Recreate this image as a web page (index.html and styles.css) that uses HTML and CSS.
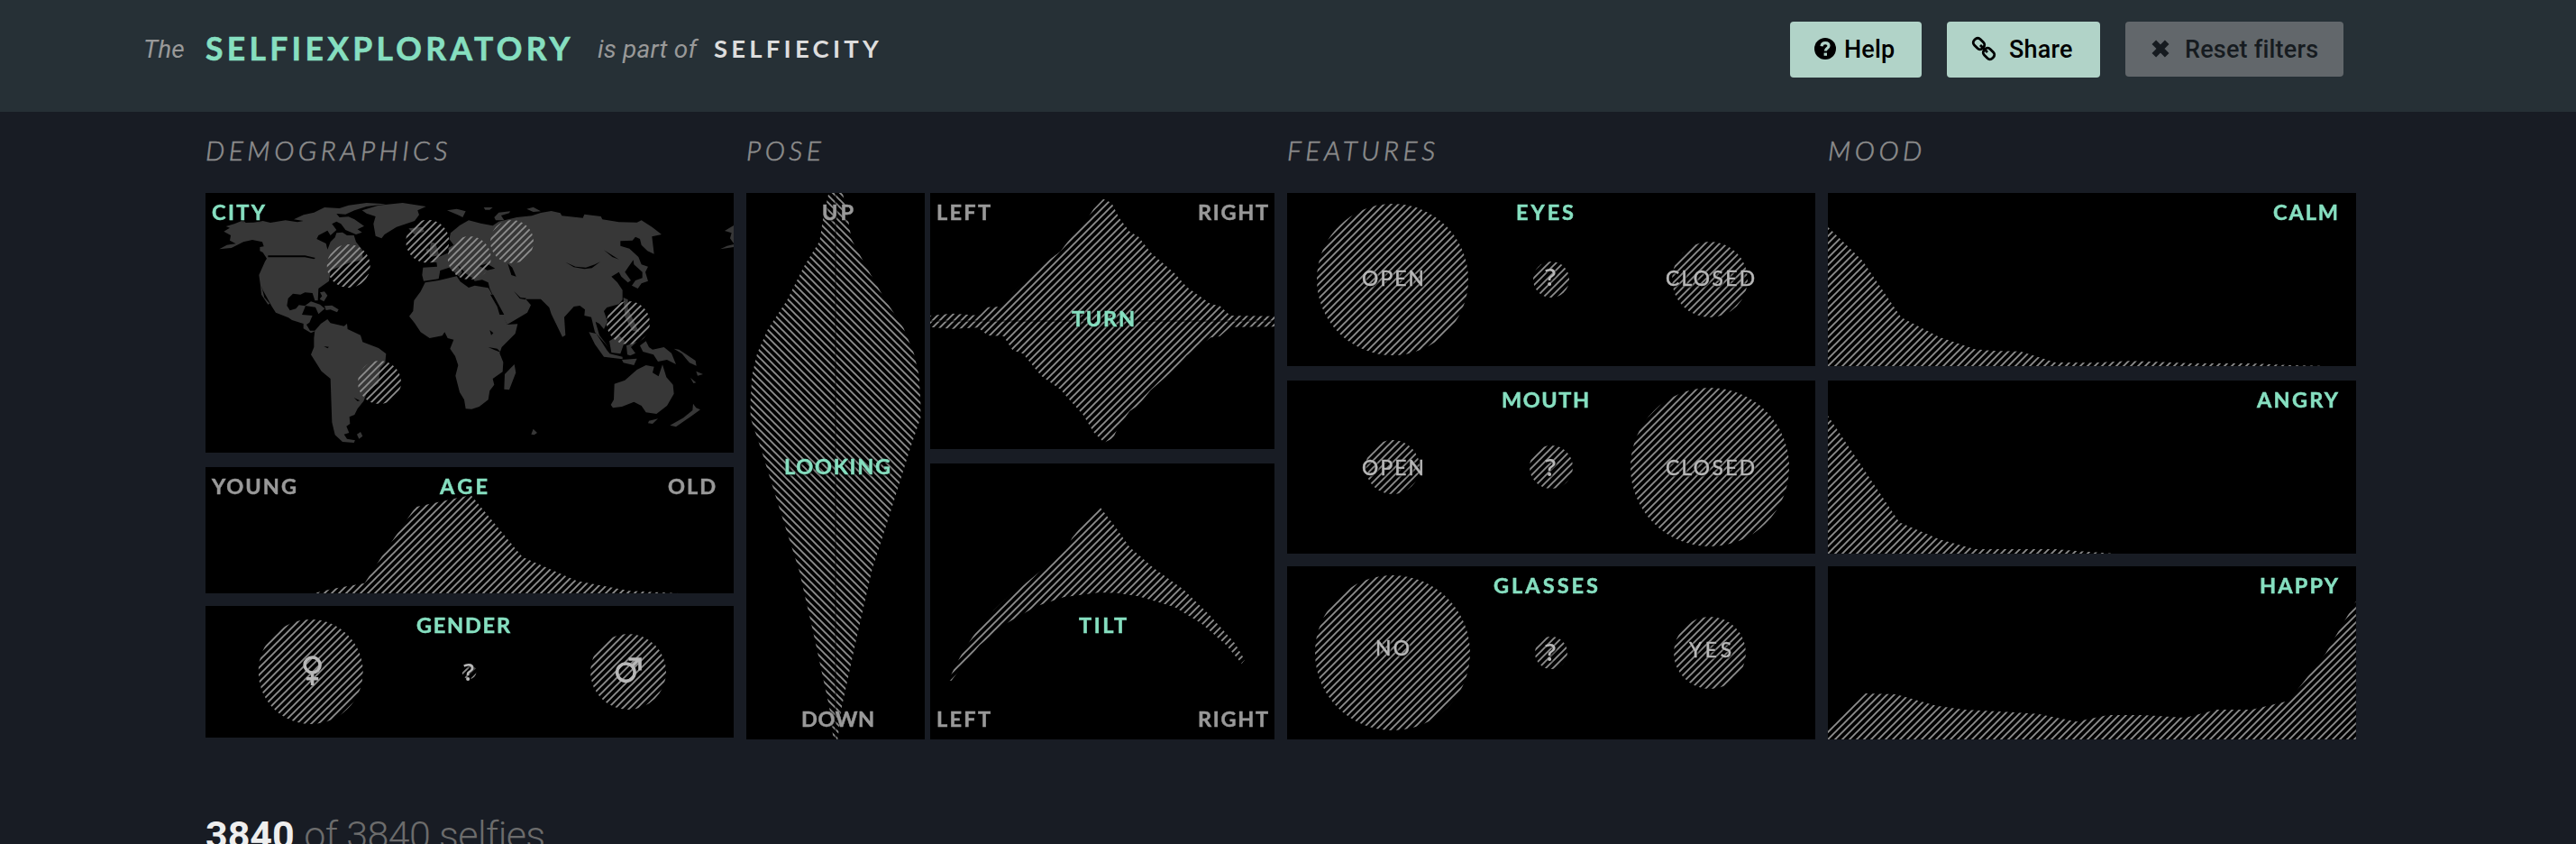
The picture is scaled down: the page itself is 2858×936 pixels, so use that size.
FILE: index.html
```html
<!DOCTYPE html>
<html lang="en">
<head>
<meta charset="utf-8">
<title>Selfiexploratory</title>
<link rel="stylesheet" href="styles.css">
</head>
<body>
<svg class="defs" width="0" height="0" aria-hidden="true">
  <defs>
    <pattern id="hatch" width="8" height="8" patternUnits="userSpaceOnUse"><path class="hatch-line" d="M-2,2 L2,-2 M0,8 L8,0 M6,10 L10,6"/></pattern>
    <pattern id="hatch-back" width="8" height="8" patternUnits="userSpaceOnUse"><path class="hatch-line" d="M-2,6 L2,10 M0,0 L8,8 M6,-2 L10,2"/></pattern>
  </defs>
</svg>
<header class="topbar">
  <div class="brand">
    <span class="brand-aside the">The</span>
    <h1 class="brand-name">SELFIEXPLORATORY</h1>
    <span class="brand-aside part">is part of</span>
    <span class="brand-parent">SELFIECITY</span>
  </div>
  <nav class="actions">
    <button class="btn help"><svg width="24" height="24" viewBox="0 0 24 24"><circle cx="12" cy="12" r="12"/><path class="q" d="M8 9.2C8.3 6.6 10 5.6 12.2 5.6C14.6 5.6 16 7 16 8.8C16 11.6 12.3 11.4 12.3 14.6"/><rect class="qd" x="10.6" y="16.6" width="3.4" height="3.2"/></svg><span>Help</span></button>
    <button class="btn share"><svg width="26" height="26" viewBox="0 0 26 26"><g class="link"><rect x="1" y="2.800" width="13" height="9.400" rx="4" transform="rotate(45 7.500 7.500)"/><rect x="12" y="13.800" width="13" height="9.400" rx="4" transform="rotate(45 18.500 18.500)"/><path d="M9 9L17 17"/></g></svg><span>Share</span></button>
    <button class="btn reset"><svg width="20" height="20" viewBox="0 0 20 20"><path class="cross" d="M2.800 2.800L17.200 17.200M17.200 2.800L2.800 17.200"/></svg><span>Reset filters</span></button>
  </nav>
</header>
<main class="board">
  <section class="group demographics">
    <h2>DEMOGRAPHICS</h2>
    <svg class="panel" width="586" height="288">
      <g class="land" transform="translate(-8 -9) scale(.33333)">
        <path d="M70 214L95 200L125 196L105 185L108 168L85 155L105 143L92 138L120 130L150 118L158 126L185 125L215 120L240 126L290 118L330 124L350 120L318 115L350 100L385 92L420 75L470 78L500 68L560 60L625 64L560 72L520 85L490 98L460 96L470 108L500 106L520 115L552 137L530 148L545 158L525 165L490 150L475 130L460 122L445 130L460 150L440 168L430 152L400 168L394 180L425 195L430 215L440 190L455 175L460 160L480 158L495 168L518 168L525 190L545 215L548 250L500 260L440 285L435 320L400 345L398 385L388 385L380 360L355 358L340 365L315 362L299 378L295 402L305 418L325 412L335 400L357 403L345 432L380 435L370 458L360 465L372 485L392 485L375 493L350 478L350 462L312 450L300 442L258 425L245 405L215 350L210 335L220 375L238 395L232 398L210 365L207 335L202 300L222 255L228 245L215 225L205 220L205 207L218 205L213 190L180 183L150 190L110 210Z"/>
        <path d="M388 485L408 462L430 447L440 460L485 470L495 462L497 480L540 500L547 523L600 543L625 562L622 592L605 610L600 660L565 682L550 720L530 745L520 765L503 772L505 795L493 803L502 825L485 830L495 845L522 850L518 858L480 855L455 832L445 790L440 645L410 620L375 565L385 540L385 510ZM528 830L540 822L547 836L535 845ZM545 85L600 68L680 60L758 72L730 85L735 100L720 120L660 140L620 165L610 178L590 170L583 130L590 105L560 95ZM355 402L375 388L405 398L421 412L400 430L390 407ZM420 403L445 401L467 415L462 424L440 415L425 417ZM405 358L420 355L430 368L418 388L404 380L412 370Z"/>
        <path d="M748 275L795 272L793 258L770 258L800 240L835 225L832 210L850 200L835 180L840 160L870 135L900 118L940 128L980 136L1000 122L1060 108L1110 103L1140 93L1175 87L1205 94L1210 103L1280 110L1285 98L1340 105L1345 115L1400 124L1460 125L1475 118L1510 140L1542 165L1510 172L1517 230L1495 220L1475 200L1470 180L1455 173L1445 185L1405 187L1405 203L1435 212L1465 240L1475 265L1497 272L1488 290L1497 320L1475 328L1463 345L1443 335L1455 318L1478 310L1478 290L1450 265L1448 250L1430 275L1420 290L1440 318L1430 325L1408 305L1400 290L1375 305L1395 325L1412 350L1412 382L1400 397L1360 408L1350 420L1362 455L1350 480L1335 462L1322 455L1335 500L1365 540L1320 490L1308 440L1285 435L1287 415L1270 402L1250 405L1218 440L1222 500L1212 506L1175 430L1168 408L1140 380L1090 380L1107 400L1095 425L1028 465L1010 430L970 345L965 325L945 316L920 320L915 312L890 295L860 262L878 290L868 305L835 275L805 285L800 313L750 320L745 300Z"/>
        <path d="M755 325L800 318L860 304L872 322L900 342L920 335L965 343L970 350L1015 435L1028 465L1063 463L1055 495L1010 540L1003 560L1015 590L1013 622L980 645L985 665L970 685L965 715L935 738L910 746L890 745L885 715L870 690L856 635L865 600L855 570L838 545L850 515L830 510L820 490L812 502L770 510L740 490L720 460L702 437L715 420L718 385L740 355ZM1020 630L1052 597L1057 625L1035 682L1018 680ZM700 145L745 140L752 155L720 166ZM770 215L775 190L790 195L802 235L770 240ZM757 215L768 210L765 232ZM828 85L860 80L890 88L880 108L860 98ZM950 75L980 75L970 83L955 83ZM985 108L1000 92L1038 88L1035 94L1008 102L1018 118L990 118ZM1093 80L1115 74L1140 88L1115 90ZM1108 830L1115 812L1128 825L1118 832ZM1782 135L1752 153L1775 160L1770 178L1782 195ZM1737 214L1760 203L1782 198V207Z"/>
        <path transform="translate(-100 0)" d="M1400 490L1425 495L1460 550L1470 562L1512 572L1512 580L1450 572L1420 530ZM1468 520L1500 500L1520 520L1505 562L1475 558ZM1525 535L1560 522L1540 540L1555 560L1538 568L1528 565ZM1510 582L1560 578L1550 600L1515 592ZM1570 535L1590 520L1600 540L1612 548L1650 540L1675 560L1690 597L1660 582L1630 588L1615 565L1580 555ZM1683 545L1700 548L1755 585L1758 602L1735 592L1710 562ZM1757 620L1780 630L1762 635ZM1738 642L1757 658L1748 660ZM1515 375L1530 382L1530 412L1567 490L1545 485L1520 440ZM1485 662L1520 650L1560 615L1590 600L1617 605L1612 625L1632 637L1645 598L1658 640L1680 665L1683 695L1660 735L1625 762L1590 757L1575 735L1550 722L1510 738L1480 742L1473 732L1483 715ZM1600 785L1630 778L1612 795L1597 793ZM1670 800L1715 775L1745 750L1747 728L1757 742L1771 748L1740 770L1690 805Z"/>
        <path class="water" d="M935 270L960 262L988 278L962 284ZM1030 262L1045 275L1058 305L1042 300ZM972 365L982 366L1018 432L1003 432L995 405ZM1222 257L1255 272L1290 275L1320 265L1338 256L1310 277L1285 280L1250 274ZM232 235L355 235L390 243L385 247L355 241H232ZM418 537L435 539L430 544ZM1050 353L1072 375L1092 377L1088 382L1070 378ZM1350 217L1400 248L1378 240ZM965 540L995 545L1008 558L985 549ZM518 708L538 718L530 720ZM970 483L982 493L975 500Z"/>
      </g>
      <g class="dots"><circle cx="158.700" cy="81" r="24"/><circle cx="246.300" cy="53.700" r="24"/><circle cx="292.700" cy="72" r="24"/><circle cx="340" cy="54" r="24"/><circle cx="469" cy="144" r="24"/><circle cx="193" cy="210" r="24"/></g>
      <text class="title" x="7" y="30" textLength="59">CITY</text>
    </svg>
    <svg class="panel" width="586" height="140">
      <clipPath id="c-age"><path transform="translate(-8.170 -13) scale(.38903 .33333)" d="M330 459L380 445L475 425L530 325L620 172L778 132L925 338L1080 418L1230 451L1370 459Z"/></clipPath>
      <rect class="area" width="586" height="140" clip-path="url(#c-age)"/>
      <text class="edge" x="7" y="30" textLength="94">YOUNG</text><text class="title" x="260" y="30" textLength="53">AGE</text><text class="edge" x="513" y="30" textLength="53">OLD</text>
    </svg>
    <svg class="panel" width="586" height="146">
      <g class="dots"><circle cx="116.700" cy="73" r="58"/><circle cx="292.500" cy="73" r="8"/><circle cx="469" cy="73" r="42"/></g>
      <text class="title" x="234" y="30" textLength="104">GENDER</text>
      <g class="symbol"><circle cx="118.600" cy="65.500" r="8.500"/><path d="M118.600 75V88M112 80.700H125.200"/><circle cx="466.400" cy="73.700" r="9.700"/><path d="M473.500 66.500L481 59M469.500 59H482V71.500"/></g>
      <text class="mark" x="286" y="83">?</text>
    </svg>
  </section>

  <section class="group pose">
    <h2>POSE</h2>
    <div class="pose-grid">
      <svg class="panel looking" width="198" height="606">
        <clipPath id="c-look"><path transform="translate(-8 -13.880) scale(.33333 .40816)" d="M298 34L278 110L268 165L215 235L160 325L95 405L60 470L43 530L38 600L38 645L75 735L130 880L200 1060L250 1240L300 1430L314 1519H328L342 1430L392 1240L442 1060L512 880L567 735L604 645L604 600L599 530L582 470L548 402L482 318L427 240L374 160L364 110L345 34Z"/></clipPath>
        <rect class="area-back" width="198" height="606" clip-path="url(#c-look)"/>
        <path class="axis" d="M99 0V606"/>
        <text class="edge" x="84" y="30" textLength="35">UP</text><text class="title" x="42" y="312" textLength="118">LOOKING</text><text class="edge" x="61" y="592" textLength="81">DOWN</text>
      </svg>
      <div class="pose-side">
        <svg class="panel" width="382" height="284">
          <clipPath id="c-turn"><path transform="translate(-12 -14) scale(.33333)" d="M36 450L110 443L200 450L228 422L275 420L310 373L405 285L470 236L510 182L545 150L580 95L612 62L640 75L665 125L700 170L730 188L770 240L850 310L890 355L970 412L1000 418L1035 450L1182 452V487L1035 488L1000 519L970 523L890 583L850 628L770 698L730 748L700 768L660 824L645 858L615 872L580 838L545 780L510 742L470 696L405 650L345 577L310 565L280 518L228 516L195 490L110 494L36 488Z"/></clipPath>
          <rect class="area" width="382" height="284" clip-path="url(#c-turn)"/>
          <path class="axis" d="M0 142H382"/>
          <text class="edge" x="7" y="30" textLength="60">LEFT</text><text class="edge" x="297" y="30" textLength="78">RIGHT</text><text class="title" x="157" y="148" textLength="70">TURN</text>
        </svg>
        <svg class="panel" width="382" height="306">
          <clipPath id="c-tilt"><path transform="translate(-12 -14) scale(.33333)" d="M97 764L122 710L148 664L188 603L248 530L308 472L345 448L400 403L460 353L488 330L508 290L545 243L600 185L650 250L700 320L780 390L880 462L965 545L1050 640L1083 695L1073 708L1020 645L940 575L850 520L730 484L660 473L600 471L480 487L390 517L285 577L200 647L138 722L107 764Z"/></clipPath>
          <rect class="area" width="382" height="306" clip-path="url(#c-tilt)"/>
          <text class="title" x="165" y="188" textLength="53">TILT</text><text class="edge" x="7" y="292" textLength="60">LEFT</text><text class="edge" x="297" y="292" textLength="78">RIGHT</text>
        </svg>
      </div>
    </div>
  </section>

  <section class="group even">
    <h2>FEATURES</h2>
    <svg class="panel" width="586" height="192">
      <g class="dots"><circle cx="117" cy="96" r="84"/><circle cx="293" cy="96" r="20"/><circle cx="469" cy="96" r="42"/></g>
      <text class="title" x="254" y="30" textLength="64">EYES</text><text class="value" x="83" y="103" textLength="69">OPEN</text><text class="mark" x="286" y="103">?</text><text class="value" x="420" y="103" textLength="99">CLOSED</text>
    </svg>
    <svg class="panel" width="586" height="192">
      <g class="dots"><circle cx="117" cy="96" r="30"/><circle cx="293" cy="96" r="24"/><circle cx="469" cy="96" r="88"/></g>
      <text class="title" x="238" y="30" textLength="97">MOUTH</text><text class="value" x="83" y="105" textLength="69">OPEN</text><text class="mark" x="286" y="106">?</text><text class="value" x="420" y="105" textLength="99">CLOSED</text>
    </svg>
    <svg class="panel" width="586" height="192">
      <g class="dots"><circle cx="117" cy="96" r="86"/><circle cx="293" cy="96" r="18"/><circle cx="469" cy="96" r="40"/></g>
      <text class="title" x="229" y="30" textLength="116">GLASSES</text><text class="value" x="98" y="99" textLength="38">NO</text><text class="mark" x="286" y="105">?</text><text class="value" x="446" y="101" textLength="47">YES</text>
    </svg>
  </section>

  <section class="group even">
    <h2>MOOD</h2>
    <svg class="panel" width="586" height="192">
      <clipPath id="c-calm"><path transform="translate(-8.170 -14) scale(.38903 .33333)" d="M21 155L120 268L230 456L340 522L440 562L490 567L570 569L670 606L780 607L880 601L960 604L1060 609L1230 609L1340 615L1430 617V618H21Z"/></clipPath>
      <rect class="area" width="586" height="192" clip-path="url(#c-calm)"/>
      <text class="title" x="494" y="30" textLength="72">CALM</text>
    </svg>
    <svg class="panel" width="586" height="192">
      <clipPath id="c-angry"><path transform="translate(-8.170 -222) scale(.38903 .33333)" d="M21 783L225 1138L340 1195L440 1227L670 1227L730 1233L840 1242H21Z"/></clipPath>
      <rect class="area" width="586" height="192" clip-path="url(#c-angry)"/>
      <text class="title" x="476" y="30" textLength="90">ANGRY</text>
    </svg>
    <svg class="panel" width="586" height="192">
      <clipPath id="c-happy"><path transform="translate(-8.170 -18) scale(.38903 .33333)" d="M21 598L128 477L215 480L330 518L410 531L520 538L620 545L730 571L820 549L920 549L1040 558L1130 531L1230 531L1335 502L1360 465L1440 345L1527 170V630H21Z"/></clipPath>
      <rect class="area" width="586" height="192" clip-path="url(#c-happy)"/>
      <text class="title" x="479" y="30" textLength="87">HAPPY</text>
    </svg>
  </section>
</main>
<footer class="count"><strong>3840</strong> <span>of 3840 selfies</span></footer>
</body>
</html>
```

FILE: styles.css
```css
* { box-sizing: border-box; margin: 0; }
html, body { height: 936px; overflow: hidden; }
body { background: #181c24; font-family: Lato, "Open Sans", sans-serif; }
.defs { display: block; height: 0; }
.topbar { display: flex; justify-content: space-between; height: 124px; background: #263036; padding: 24px 258px 0 158px; }
.brand { display: flex; align-items: flex-start; height: 62px; white-space: nowrap; }
.brand-aside { font: italic 400 28px/62px Roboto, sans-serif; color: #999; }
.the { width: 70px; padding-left: 1px; }
.brand-name { width: 435px; font-size: 35.500px; font-weight: 700; color: #86dfc0; letter-spacing: 4.300px; line-height: 59px; -webkit-text-stroke: .6px #86dfc0; }
.part { width: 129px; letter-spacing: 0.2px; }
.brand-parent { font-size: 27.500px; font-weight: 700; color: #ddd; letter-spacing: 4.200px; line-height: 60px; }
.actions { display: flex; gap: 28px; align-items: flex-start; }
.btn { display: flex; align-items: center; height: 62px; border: 0; border-radius: 4px; background: #b1d3c8; color: #000; font: 500 27px/60px Roboto, sans-serif; padding: 0; white-space: nowrap; letter-spacing: 0.200px; }
.help { width: 146px; padding-left: 27px; gap: 9px; }
.share { width: 170px; padding-left: 28px; gap: 15px; }
.reset { width: 242px; height: 61px; padding-left: 29px; gap: 17px; background: #62676b; color: #161b20; }
.btn svg { flex: none; position: relative; top: -1px; overflow: visible; }
.q { fill: none; stroke: #b1d3c8; stroke-width: 3.2; }
.qd { fill: #b1d3c8; }
.link { fill: none; stroke: #000; stroke-width: 2.8; }
.cross { fill: none; stroke: #161b20; stroke-width: 6.500; }
.board { display: grid; grid-template-columns: repeat(4, 586px); column-gap: 14px; padding-left: 228px; height: 696px; }
.group { display: flex; flex-direction: column; gap: 16px; }
.group h2 { height: 90px; margin-bottom: -16px; font: italic 300 30px/85px Lato, sans-serif; letter-spacing: 4.500px; color: #8c8c8c; -webkit-text-stroke: .6px #8c8c8c; }
.demographics .panel:last-child { margin-top: -2px; }
.even .panel:last-child { margin-top: -2px; }
.panel { display: block; flex: none; background: #000; }
.pose-grid { display: flex; gap: 6px; }
.pose-side { display: flex; flex-direction: column; gap: 16px; }
.hatch-line { fill: none; stroke: #8c8c8c; stroke-width: 1.9; }
.land { fill: #373737; }
.water { fill: #000; }
.dots { fill: url(#hatch); }
.area { fill: url(#hatch); }
.area-back { fill: url(#hatch-back); }
.axis { fill: none; stroke: #000; stroke-opacity: .45; stroke-width: 2; }
text { font-family: Lato, sans-serif; font-size: 23.500px; filter: drop-shadow(1px 1px 1px #000); }
.title { fill: #86dfc0; font-weight: 700; stroke: #86dfc0; stroke-width: .5px; }
.edge { fill: #999; font-weight: 700; stroke: #999; stroke-width: .5px; }
.value { fill: #b8b8b8; font-weight: 400; font-size: 22.800px; stroke: #b8b8b8; stroke-width: .5px; }
.mark { fill: #b8b8b8; font-weight: 600; font-size: 27px; font-family: "Open Sans", sans-serif; }
.symbol { fill: none; stroke: #b8b8b8; stroke-width: 3.600; }
.count { padding: 76px 0 0 228px; height: 116px; overflow: hidden; font: 300 43px/60px Roboto, sans-serif; white-space: nowrap; color: #6c6c6c; }
.count strong { color: #eee; font-weight: 700; }
.count span { letter-spacing: -.6px; }
```
